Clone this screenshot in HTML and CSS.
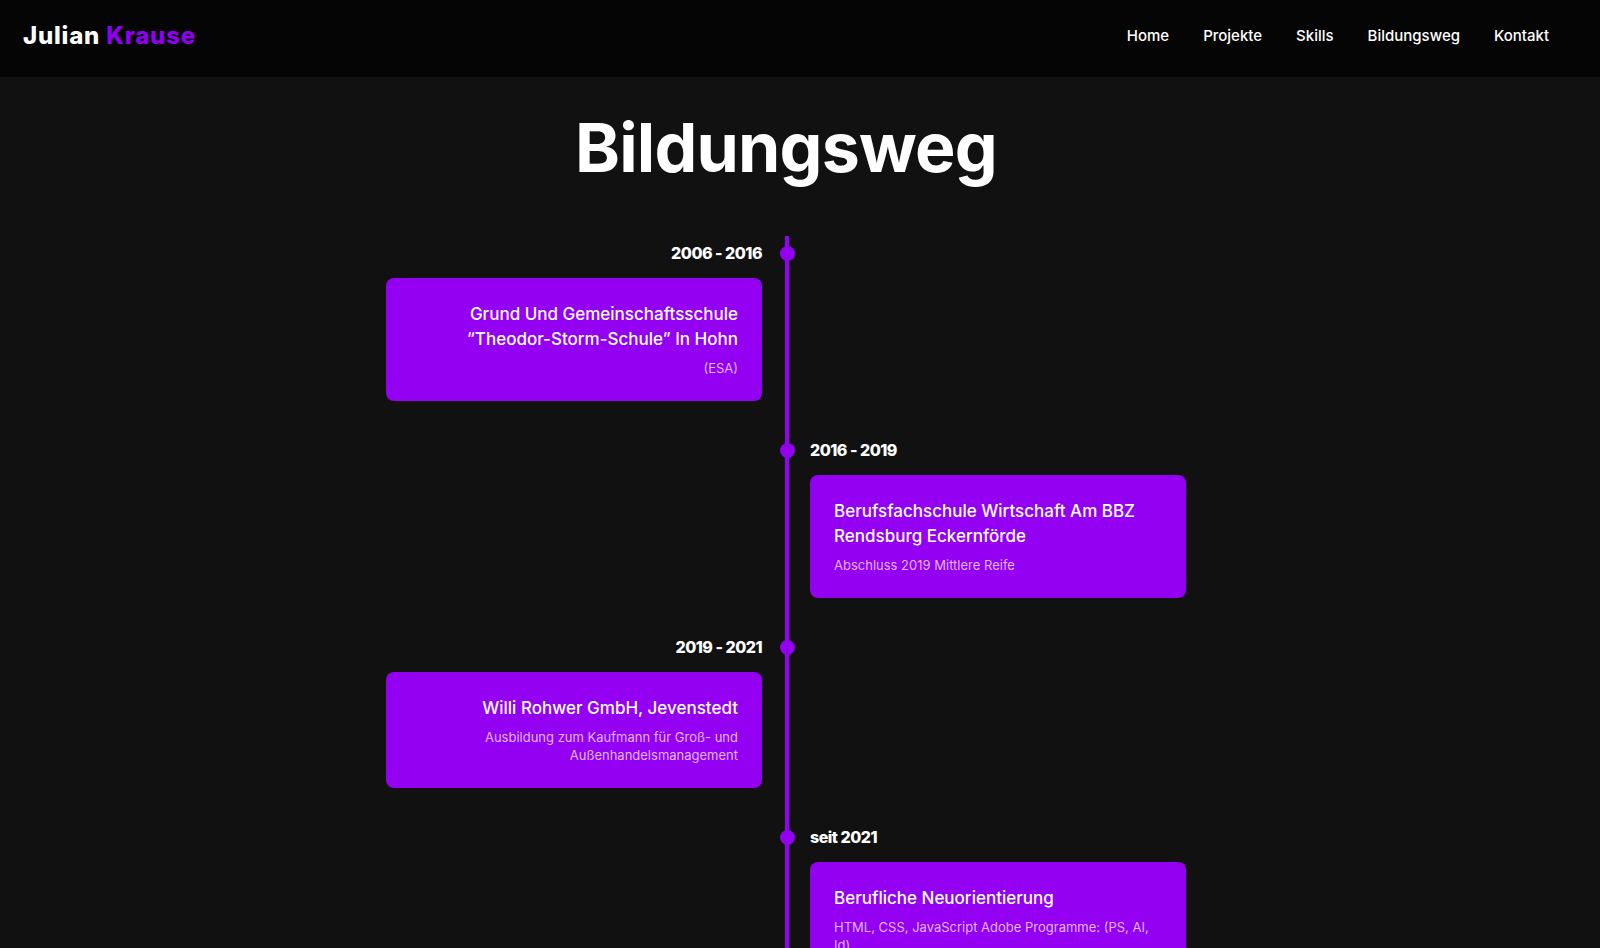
FILE: index.html
```html
<!DOCTYPE html>
<html lang="de">
<head>
<meta charset="utf-8">
<title>Julian Krause – Bildungsweg</title>
<link rel="stylesheet" href="styles.css">
</head>
<body>
<header class="site-header">
  <a class="logo" href="#"><span class="logo-first">Julian</span> <span class="logo-last">Krause</span></a>
  <nav class="nav">
    <a href="#">Home</a>
    <a href="#">Projekte</a>
    <a href="#">Skills</a>
    <a href="#">Bildungsweg</a>
    <a href="#">Kontakt</a>
  </nav>
</header>
<main class="page">
  <h1 class="page-title">Bildungsweg</h1>
  <section class="timeline">
    <article class="entry entry-left">
      <div class="entry-year">2006 - 2016</div>
      <div class="entry-card">
        <h3 class="entry-title">Grund Und Gemeinschaftsschule “Theodor-Storm-Schule” In Hohn</h3>
        <p class="entry-text">(ESA)</p>
      </div>
    </article>
    <article class="entry entry-right">
      <div class="entry-year">2016 - 2019</div>
      <div class="entry-card">
        <h3 class="entry-title">Berufsfachschule Wirtschaft Am BBZ Rendsburg Eckernförde</h3>
        <p class="entry-text">Abschluss 2019 Mittlere Reife</p>
      </div>
    </article>
    <article class="entry entry-left">
      <div class="entry-year">2019 - 2021</div>
      <div class="entry-card">
        <h3 class="entry-title">Willi Rohwer GmbH, Jevenstedt</h3>
        <p class="entry-text">Ausbildung zum Kaufmann für Groß- und Außenhandelsmanagement</p>
      </div>
    </article>
    <article class="entry entry-right">
      <div class="entry-year">seit 2021</div>
      <div class="entry-card">
        <h3 class="entry-title">Berufliche Neuorientierung</h3>
        <p class="entry-text">HTML, CSS, JavaScript Adobe Programme: (PS, AI, Id)</p>
      </div>
    </article>
  </section>
</main>
</body>
</html>
```

FILE: styles.css
```css
body {
  margin: 0;
  background: #111111;
  color: #ffffff;
  font-family: Inter, "Noto Sans", sans-serif;
}

.site-header {
  height: 77px;
  box-sizing: border-box;
  background: #050505;
  display: flex;
  align-items: center;
  justify-content: space-between;
  padding: 0 51px 6px 23px;
}

.logo {
  font-size: 24px;
  font-weight: 800;
  color: #ffffff;
  text-decoration: none;
  letter-spacing: 0.8px;
}

.logo-last {
  color: #9000f0;
}

.nav {
  display: flex;
  gap: 34px;
}

.nav a {
  color: #ffffff;
  text-decoration: none;
  font-size: 15px;
  font-weight: 500;
}

.page {
  max-width: 1572px;
}

.page-title {
  margin: 27px 0 46px;
  text-align: center;
  font-size: 68px;
  line-height: 86px;
  font-weight: 700;
  letter-spacing: -0.8px;
}

.timeline {
  position: relative;
  width: 800px;
  margin: 0 auto;
  padding-top: 5px;
}

.timeline::before {
  content: "";
  position: absolute;
  top: 0;
  bottom: 0;
  left: calc(50% - 1px);
  width: 4px;
  background: #9400f2;
}

.entry {
  width: 50%;
  box-sizing: border-box;
  margin-bottom: 37px;
}

.entry-left {
  padding-right: 24px;
  text-align: right;
}

.entry-right {
  margin-left: 50%;
  padding-left: 24px;
}

.entry-year {
  position: relative;
  font-size: 16px;
  font-weight: 800;
  line-height: 24px;
  letter-spacing: -0.5px;
  margin-bottom: 13px;
}

.entry-year::after {
  content: "";
  position: absolute;
  top: 50%;
  width: 15px;
  height: 15px;
  margin-top: -7.5px;
  border-radius: 50%;
  background: #9400f2;
}

.entry-left .entry-year::after {
  right: -32.5px;
}

.entry-right .entry-year::after {
  left: -30.5px;
}

.entry-card {
  background: #9400f2;
  border-radius: 8px;
  padding: 24px;
}

.entry-title {
  margin: 0;
  font-size: 17px;
  line-height: 25px;
  font-weight: 500;
}

.entry-text {
  margin: 7px 0 0;
  font-size: 13px;
  line-height: 18px;
  color: rgba(255, 255, 255, 0.72);
}
```
